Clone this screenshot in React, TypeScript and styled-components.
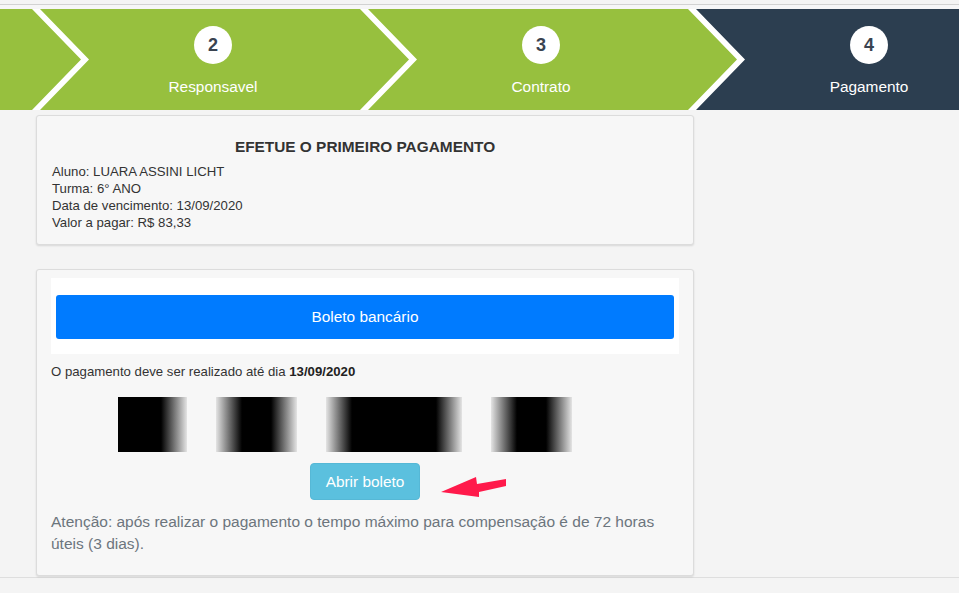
import React from 'react'
import styled, { createGlobalStyle } from 'styled-components'

const GlobalStyle = createGlobalStyle`
  html, body {
    margin: 0;
    padding: 0;
    background: #f4f4f4;
    font-family: "Liberation Sans", Arial, Helvetica, sans-serif;
    color: #333;
  }
`;

type Step = { num: number; label: string; active?: boolean }

// step 1 is scrolled out of view, only its arrow tail shows
const steps: Step[] = [
  { num: 2, label: 'Responsavel' },
  { num: 3, label: 'Contrato' },
  { num: 4, label: 'Pagamento', active: true },
]

const bars = [
  { width: 69, fadeLeft: false },
  { width: 81, fadeLeft: true },
  { width: 136, fadeLeft: true },
  { width: 81, fadeLeft: true },
]

export default function App() {
  return (
    <Page>
      <GlobalStyle />
      <TopLine />
      <Steps>
        <StepItem aria-hidden />
        {steps.map((s) => (
          <StepItem key={s.num} $active={s.active}>
            <StepNumber>{s.num}</StepNumber>
            <StepLabel>{s.label}</StepLabel>
          </StepItem>
        ))}
      </Steps>

      <Column>
        <Card>
          <Title>EFETUE O PRIMEIRO PAGAMENTO</Title>
          <InfoLine>Aluno: LUARA ASSINI LICHT</InfoLine>
          <InfoLine>Turma: 6° ANO</InfoLine>
          <InfoLine>Data de vencimento: 13/09/2020</InfoLine>
          <InfoLine>Valor a pagar: R$ 83,33</InfoLine>
        </Card>

        <PayCard>
          <MethodBox>
            <MethodButton>Boleto bancário</MethodButton>
          </MethodBox>
          <DueText>
            O pagamento deve ser realizado até dia <b>13/09/2020</b>
          </DueText>
          <Barcode>
            {bars.map((b, i) => (
              <Bar key={i} $fadeLeft={b.fadeLeft} style={{ width: b.width }} />
            ))}
          </Barcode>
          <ButtonRow>
            <OpenWrap>
              <OpenButton>Abrir boleto</OpenButton>
              <Pointer width="70" height="26" viewBox="0 0 70 26">
                <polygon
                  points="2,18 37,3 38,10 67,5 67,12 40,18 40,23"
                  fill="#ff1a4b"
                />
              </Pointer>
            </OpenWrap>
          </ButtonRow>
          <Notice>
            Atenção: após realizar o pagamento o tempo máximo para compensação é de 72 horas
            úteis (3 dias).
          </Notice>
        </PayCard>
      </Column>
      <Footer />
    </Page>
  )
}

const Page = styled.div`
  width: 959px;
  min-height: 593px;
  overflow: hidden;
  padding-top: 4px;
`;

const TopLine = styled.div`
  height: 4px;
  border-top: 1px solid #d2d2d2;
  background: #f6f6f7;
`;

const Steps = styled.div`
  display: flex;
  height: 101px;
  background: #ffffff;
  overflow: hidden;
`;

const StepItem = styled.div<{ $active?: boolean }>`
  flex: 0 0 369px;
  margin-right: -41px;
  box-sizing: border-box;
  padding: 17px 23px 0 0;
  display: flex;
  flex-direction: column;
  align-items: center;
  background: ${(p) => (p.$active ? '#2c3e50' : '#97c03e')};
  clip-path: polygon(0 0, 320px 0, 100% 50%, 320px 100%, 0 100%, 49px 50%);

  &:first-child {
    margin-left: -288px;
  }
`;

const StepNumber = styled.div`
  width: 38px;
  height: 38px;
  border-radius: 50%;
  background: #fff;
  color: #3a4350;
  font-weight: bold;
  font-size: 18px;
  display: flex;
  align-items: center;
  justify-content: center;
  margin-bottom: 14px;
`;

const StepLabel = styled.div`
  color: #fff;
  font-size: 15.4px;
  line-height: 18px;
`;

const Column = styled.div`
  width: 658px;
  margin-left: 36px;
  padding-top: 5px;
  display: flex;
  flex-direction: column;
  gap: 24px;
`;

const Card = styled.div`
  background: #f7f7f7;
  border: 1px solid #dcdcdc;
  border-radius: 3px;
  box-shadow: 0 1px 2px rgba(0, 0, 0, 0.12);
  padding: 15px 15px 13px;
`;

const Title = styled.div`
  text-align: center;
  font-weight: bold;
  font-size: 15.4px;
  line-height: 18px;
  margin: 7px 0 7px;
  color: #333;
`;

const InfoLine = styled.div`
  font-size: 13.2px;
  line-height: 17px;
  color: #333;
`;

const PayCard = styled(Card)`
  padding: 8px 14px 20px;
`;

const MethodBox = styled.div`
  background: #fff;
  padding: 17px 5px 15px;
`;

const MethodButton = styled.button`
  display: block;
  width: 100%;
  height: 44px;
  border: none;
  border-radius: 3px;
  background: #007bff;
  color: #fff;
  font-family: inherit;
  font-size: 15.4px;
`;

const DueText = styled.div`
  margin-top: 9px;
  font-size: 13.2px;
  line-height: 18px;
  color: #333;

  b {
    color: #222;
  }
`;

const Barcode = styled.div`
  display: flex;
  gap: 29px;
  margin: 16px 0 0 67px;
  height: 55px;
`;

const Bar = styled.div<{ $fadeLeft: boolean }>`
  height: 100%;
  background: ${(p) =>
    p.$fadeLeft
      ? 'linear-gradient(to right, #e4e4e4 0, #000 26px, #000 calc(100% - 26px), #e4e4e4 100%)'
      : 'linear-gradient(to right, #000 0, #000 calc(100% - 26px), #e4e4e4 100%)'};
`;

const ButtonRow = styled.div`
  display: flex;
  justify-content: center;
  margin-top: 11px;
`;

const OpenWrap = styled.div`
  position: relative;
`;

const OpenButton = styled.button`
  width: 110px;
  height: 37px;
  border: 1px solid #56b8d6;
  border-radius: 4px;
  background: #5bc0de;
  color: #fff;
  font-family: inherit;
  font-size: 15.4px;
`;

const Pointer = styled.svg`
  position: absolute;
  left: 129px;
  top: 11px;
`;

const Notice = styled.p`
  margin: 11px 0 0;
  font-size: 15.5px;
  line-height: 22px;
  color: #6c757d;
`;

const Footer = styled.div`
  margin-top: 1px;
  border-top: 1px solid #dedede;
  height: 20px;
`;
